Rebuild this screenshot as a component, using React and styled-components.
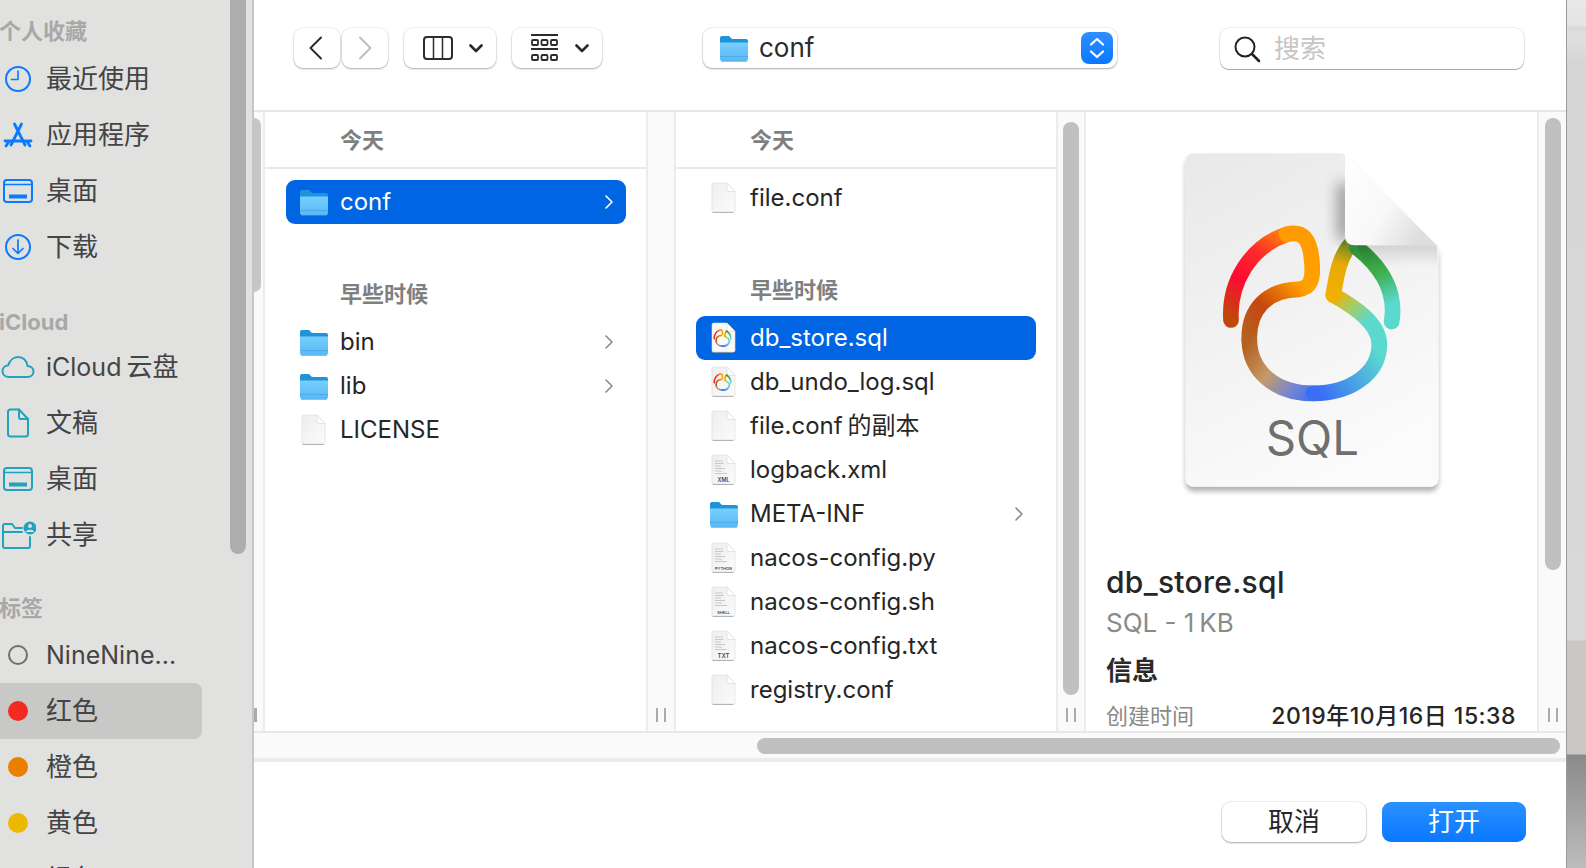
// Import: Dependencies
import React from "react";
import styled, { createGlobalStyle } from "styled-components";

// Styled: NamePart, one piece of a mixed Latin and Chinese name
const NamePart = styled.span`
  font-size: ${(props) => props.$size}px;
  margin-left: ${(props) => props.$gap || 0}px;
`;

// Data: sidebar
const BLUE = "#0a7aff";
const TEAL = "#22a3bd";

const favourites = [
  { id: "recent", name: "最近使用", icon: "clock" },
  { id: "apps", name: "应用程序", icon: "apps" },
  { id: "desktop", name: "桌面", icon: "desktop" },
  { id: "downloads", name: "下载", icon: "download" },
];
const cloudItems = [
  {
    id: "drive",
    name: (
      <>
        <NamePart $size={25}>iCloud</NamePart>
        <NamePart $size={26} $gap={5}>云盘</NamePart>
      </>
    ),
    icon: "cloud",
  },
  { id: "docs", name: "文稿", icon: "doc" },
  { id: "desktop", name: "桌面", icon: "desktop" },
  { id: "shared", name: "共享", icon: "share" },
];
const tags = [
  { name: "NineNine...", ring: true, color: "#6f6f6f", latin: true },
  { name: "红色", color: "#f42a22", active: true },
  { name: "橙色", color: "#ea7f00" },
  { name: "黄色", color: "#edb800" },
  { name: "绿色", color: "#3fb54a" },
];

// Data: file rows
const confFiles = [
  { id: "store", name: "db_store.sql", kind: "sql", selected: true },
  { id: "undo", name: "db_undo_log.sql", kind: "sql" },
  {
    id: "copy",
    name: (
      <>
        file.conf<NamePart $size={24} $gap={5}>的副本</NamePart>
      </>
    ),
    kind: "blank",
  },
  { id: "logback", name: "logback.xml", kind: "text", label: "XML" },
  { id: "meta", name: "META-INF", kind: "folder", more: true },
  { id: "py", name: "nacos-config.py", kind: "text", label: "PYTHON" },
  { id: "sh", name: "nacos-config.sh", kind: "text", label: "SHELL" },
  { id: "txt", name: "nacos-config.txt", kind: "text", label: "TXT" },
  { id: "registry", name: "registry.conf", kind: "blank" },
];

// Icon: SidebarIcon
function SidebarIcon({ type, color }) {
  const line = { fill: "none", stroke: color, strokeWidth: 2, strokeLinecap: "round", strokeLinejoin: "round" };
  return (
    <svg width="36" height="32" viewBox="0 0 36 32">
      {type === "clock" && (
        <g {...line}>
          <circle cx="18" cy="16" r="12" />
          <path d="M18 8v8.5h-6.5" strokeWidth="1.6" />
        </g>
      )}
      {type === "apps" && (
        <g {...line} strokeWidth="2.8">
          <path d="M14.500 5l10.500 21M21.500 5L11 26" />
          <path d="M5 22h26" />
          <path d="M6 27l3-4.500M30 27l-3-4.500" />
        </g>
      )}
      {type === "desktop" && (
        <g {...line}>
          <rect x="4" y="5" width="28" height="22" rx="3" />
          <path d="M4 9.5h28" strokeWidth="1.4" />
          <path d="M9 21.5h18" strokeWidth="4" strokeLinecap="butt" />
        </g>
      )}
      {type === "download" && (
        <g {...line}>
          <circle cx="18" cy="16" r="12" />
          <path d="M18 9v13M13 17.5l5 5 5-5" strokeWidth="1.7" />
        </g>
      )}
      {type === "cloud" && (
        <g {...line}>
          <path d="M9 26c-4 0-6.500-2.500-6.500-5.800 0-3.200 2.400-5.500 5.600-5.600C9.500 9.500 13.500 6 18 6c5.200 0 9 3.800 9.500 9 3.500.2 6 2.500 6 5.600 0 3.200-2.500 5.400-6 5.400z" />
        </g>
      )}
      {type === "doc" && (
        <g {...line}>
          <path d="M10.500 2.500h8.500l9 9.500v15a2.500 2.500 0 0 1-2.500 2.500h-15A2.500 2.500 0 0 1 8 27V5a2.500 2.500 0 0 1 2.500-2.500z" />
          <path d="M19 2.500V10a2 2 0 0 0 2 2h7" />
        </g>
      )}
      {type === "share" && (
        <g {...line}>
          <path d="M3 14v13a2 2 0 0 0 2 2h23a2 2 0 0 0 2-2V18" />
          <path d="M3 14V7a2 2 0 0 1 2-2h7l3 4h7" />
          <path d="M3 13h19" />
          <circle cx="30" cy="9" r="6.500" fill={color} stroke="none" />
          <circle cx="30" cy="7" r="2" fill="#e1e1e0" stroke="none" />
          <path d="M26 13c.8-2.500 7.200-2.500 8 0" stroke="#e1e1e0" fill="#e1e1e0" strokeWidth="1" />
        </g>
      )}
    </svg>
  );
}

// Icon: FolderIcon
function FolderIcon() {
  return (
    <svg width="30" height="28" viewBox="0 0 30 28">
      <path d="M1 4a2 2 0 0 1 2-2h7l3 3h14a2 2 0 0 1 2 2v6H1z" fill="#1f93d8" />
      <path d="M1 8.500h28V25a2 2 0 0 1-2 2H3a2 2 0 0 1-2-2z" fill="url(#folderFront)" />
      <path d="M1 22.500h28" stroke="#4fa9e6" strokeWidth="1" />
      <path d="M2 27.500h26" stroke="#7d8a94" strokeWidth="1" opacity="0.6" />
    </svg>
  );
}

// Icon: Navicat logo, drawn in the coordinates of the big preview
function NavicatLogo({ width = 47 }) {
  const stroke = (id) => ({
    fill: "none",
    stroke: `url(#${id})`,
    strokeWidth: width,
    strokeLinecap: "round",
    strokeLinejoin: "round",
  });
  return (
    <g>
      <path d="M183 540C176 430 240 320 350 283" {...stroke("logoA")} />
      <path d="M350 283C400 270 420 300 425 360C432 420 420 445 385 448" {...stroke("logoB")} />
      <path d="M385 448C290 450 235 510 238 600" {...stroke("logoC")} />
      <path d="M238 600C240 690 310 760 430 760" {...stroke("logoD")} />
      <path d="M430 760C540 760 630 700 628 610" {...stroke("logoE")} />
      <path d="M628 610C625 550 560 505 490 465" {...stroke("logoF")} />
      <path d="M490 465C500 400 510 350 540 315" {...stroke("logoG")} />
      <path d="M560 322C620 370 682 440 665 545" {...stroke("logoH")} />
    </g>
  );
}

// Icon: DocIcon
function DocIcon({ kind, label, selected }) {
  return (
    <svg width="28" height="32" viewBox="0 0 28 32">
      <path
        d="M3 2.500a1.500 1.500 0 0 1 1.500-1.500H18l8 8.500v19a1.500 1.500 0 0 1-1.500 1.500h-20A1.500 1.500 0 0 1 3 28.500z"
        fill={selected ? "#f8f8f8" : "url(#docPage)"}
        stroke="#d9d9d9"
        strokeWidth="0.6"
      />
      <path d="M18 1v7a1.500 1.500 0 0 0 1.500 1.500H26z" fill="#fff" stroke="#d4d4d4" strokeWidth="0.6" />
      <path d="M3.500 30.500h21" stroke="#9a9a9a" strokeWidth="1" opacity="0.7" />
      {kind === "sql" && (
        <g transform="translate(13.500 16) scale(0.034) translate(-425 -520)">
          <NavicatLogo width={48} />
        </g>
      )}
      {kind === "text" && (
        <g>
          <path d="M6 7h8M6 9.500h9M6 12h6M6 14.500h10M6 17h7M6 19.500h12" stroke="#bdbdbd" strokeWidth="0.8" />
          <text x="14.500" y="27.500" textAnchor="middle" fontSize={label === "TXT" ? 6 : label === "XML" ? 5.500 : 4} fontWeight="600" fill="#4a4a4a" fontFamily="Inter, sans-serif">
            {label}
          </text>
        </g>
      )}
    </svg>
  );
}

// Icon: Chevron in a file row
function RowChevron({ color }) {
  return (
    <svg width="10" height="16" viewBox="0 0 10 16">
      <path d="M2 2l6 6-6 6" fill="none" stroke={color} strokeWidth="1.600" strokeLinecap="round" strokeLinejoin="round" />
    </svg>
  );
}

// Icon: small chevron of the toolbar menus
function MenuChevron() {
  return (
    <svg width="14" height="9" viewBox="0 0 14 9">
      <path d="M1.500 1.500L7 7l5.500-5.500" fill="none" stroke="#2a2a2a" strokeWidth="2.600" strokeLinecap="round" strokeLinejoin="round" />
    </svg>
  );
}

// Component: FileRow
function FileRow({ name, kind, label, selected, more }) {
  return (
    <Row $selected={selected}>
      <RowIcon>
        {kind === "folder" ? <FolderIcon /> : <DocIcon kind={kind} label={label} selected={selected} />}
      </RowIcon>
      <RowName>{name}</RowName>
      {more && <RowChevron color={selected ? "#fff" : "#8a8a8a"} />}
    </Row>
  );
}

// Component: Gutter between two columns
function Gutter({ thumbTop, thumbHeight, edge }) {
  return (
    <GutterBar $edge={edge}>
      {thumbHeight ? <Thumb $top={thumbTop} $height={thumbHeight} $edge={edge} /> : null}
      <Handle $edge={edge}>
        <i />
        {edge !== "left" && <i />}
      </Handle>
    </GutterBar>
  );
}

// page: App
function App() {
  return (
    <Page>
      <GlobalStyle />
      <Sidebar>
        <SideScroll />
        <SideTitle $top={17} $bottom={6}>个人收藏</SideTitle>
        {favourites.map((item) => (
          <SideRow key={item.id}>
            <SidebarIcon type={item.icon} color={BLUE} />
            <SideName>{item.name}</SideName>
          </SideRow>
        ))}
        <SideTitle $top={33} $bottom={3}>iCloud</SideTitle>
        {cloudItems.map((item) => (
          <SideRow key={item.id}>
            <SidebarIcon type={item.icon} color={TEAL} />
            <SideName>{item.name}</SideName>
          </SideRow>
        ))}
        <SideTitle $top={31} $bottom={5}>标签</SideTitle>
        {tags.map((item) => (
          <SideRow key={item.name} $active={item.active}>
            <TagBox>
              <TagDot $color={item.color} $ring={item.ring} />
            </TagBox>
            <SideName $latin={item.latin}>{item.name}</SideName>
          </SideRow>
        ))}
      </Sidebar>

      <Dialog>
        <Toolbar>
          <NavButton>
            <svg width="16" height="24" viewBox="0 0 16 24">
              <path d="M13 1.500L2.500 12 13 22.500" fill="none" stroke="#2c2c2c" strokeWidth="2" strokeLinecap="round" strokeLinejoin="round" />
            </svg>
          </NavButton>
          <NavButton $next>
            <svg width="16" height="24" viewBox="0 0 16 24">
              <path d="M3 1.500L13.500 12 3 22.500" fill="none" stroke="#bdbdbd" strokeWidth="2" strokeLinecap="round" strokeLinejoin="round" />
            </svg>
          </NavButton>
          <MenuButton $width={92} $gap={16} $left={16}>
            <svg width="30" height="24" viewBox="0 0 30 24">
              <rect x="1" y="1" width="28" height="22" rx="3" fill="none" stroke="#2c2c2c" strokeWidth="2" />
              <path d="M10.500 1v22M19.500 1v22" stroke="#2c2c2c" strokeWidth="1.500" />
            </svg>
            <MenuChevron />
          </MenuButton>
          <MenuButton $width={90} $gap={17} $left={16}>
            <svg width="27" height="28" viewBox="0 0 27 28">
              <path d="M0 1h27M0 15h27" stroke="#2c2c2c" strokeWidth="1.800" />
              <g fill="none" stroke="#2c2c2c" strokeWidth="1.800">
                <rect x="1" y="6" width="6" height="5" rx="1" />
                <rect x="10.500" y="6" width="6" height="5" rx="1" />
                <rect x="20" y="6" width="6" height="5" rx="1" />
                <rect x="1" y="21" width="6" height="5" rx="1" />
                <rect x="10.500" y="21" width="6" height="5" rx="1" />
                <rect x="20" y="21" width="6" height="5" rx="1" />
              </g>
            </svg>
            <MenuChevron />
          </MenuButton>
          <LocationPopup>
            <FolderIcon />
            <LocationName>conf</LocationName>
            <Stepper>
              <svg width="18" height="24" viewBox="0 0 18 24">
                <path d="M3 8.500L9 3l6 5.500M3 15.500L9 21l6-5.500" fill="none" stroke="#fff" strokeWidth="2.200" strokeLinecap="round" strokeLinejoin="round" />
              </svg>
            </Stepper>
          </LocationPopup>
          <SearchField>
            <svg width="28" height="28" viewBox="0 0 28 28">
              <circle cx="12" cy="12" r="9.500" fill="none" stroke="#222" strokeWidth="2" />
              <path d="M19 19l7 7" stroke="#222" strokeWidth="2.600" strokeLinecap="round" />
            </svg>
            <SearchHint>搜索</SearchHint>
          </SearchField>
        </Toolbar>

        <Browser>
          <Gutter thumbTop={6} thumbHeight={174} edge="left" />
          <FileColumn $width={381}>
            <ColumnHeader $left={75}>今天</ColumnHeader>
            <RowList $top={11} $left={21}>
              <FileRow name="conf" kind="folder" selected more />
              <GroupTitle>早些时候</GroupTitle>
              <FileRow name="bin" kind="folder" more />
              <FileRow name="lib" kind="folder" more />
              <FileRow name="LICENSE" kind="blank" />
            </RowList>
          </FileColumn>
          <Gutter />
          <FileColumn $width={380}>
            <ColumnHeader $left={74}>今天</ColumnHeader>
            <RowList $top={7} $left={20}>
              <FileRow name="file.conf" kind="blank" />
              <GroupTitle>早些时候</GroupTitle>
              {confFiles.map((file) => (
                <FileRow key={file.id} {...file} />
              ))}
            </RowList>
          </FileColumn>
          <Gutter thumbTop={10} thumbHeight={573} />
          <Preview>
            <PreviewIcon>
              <svg width="290" height="370" viewBox="0 0 870 1110">
                <defs>
                  <linearGradient id="folderFront" x1="0" y1="0" x2="0" y2="1">
                    <stop offset="0" stopColor="#78cffd" />
                    <stop offset="1" stopColor="#58b8f5" />
                  </linearGradient>
                  <linearGradient id="docPage" x1="0" y1="0" x2="1" y2="1">
                    <stop offset="0" stopColor="#eeeeee" />
                    <stop offset="1" stopColor="#fbfbfb" />
                  </linearGradient>
                  <linearGradient id="bigPage" x1="0.100" y1="0" x2="0.500" y2="1">
                    <stop offset="0" stopColor="#e9e9e9" />
                    <stop offset="1" stopColor="#fbfbfb" />
                  </linearGradient>
                  <linearGradient id="foldFill" x1="0" y1="0" x2="1" y2="0.600">
                    <stop offset="0" stopColor="#ffffff" />
                    <stop offset="0.600" stopColor="#f8f8f8" />
                    <stop offset="1" stopColor="#dedede" />
                  </linearGradient>
                  <linearGradient id="foldShadeLow" x1="0" y1="0" x2="0" y2="1">
                    <stop offset="0" stopColor="#000" stopOpacity="0.130" />
                    <stop offset="1" stopColor="#000" stopOpacity="0" />
                  </linearGradient>
                  <filter id="pageShadow" x="-10%" y="-10%" width="120%" height="120%">
                    <feDropShadow dx="0" dy="14" stdDeviation="8" floodColor="#000" floodOpacity="0.300" />
                  </filter>
                  <filter id="foldBlur" x="-150%" y="-40%" width="400%" height="180%">
                    <feGaussianBlur stdDeviation="22" />
                  </filter>
                  <clipPath id="foldClip">
                    <rect x="400" y="40" width="125" height="280" />
                  </clipPath>
                  <linearGradient id="logoA" gradientUnits="userSpaceOnUse" x1="183" y1="540" x2="370" y2="270">
                    <stop offset="0" stopColor="#bf4a08" />
                    <stop offset="0.350" stopColor="#ff0a32" />
                    <stop offset="0.650" stopColor="#ff2a2a" />
                    <stop offset="1" stopColor="#ff9a00" />
                  </linearGradient>
                  <linearGradient id="logoB" gradientUnits="userSpaceOnUse" x1="350" y1="283" x2="400" y2="448">
                    <stop offset="0" stopColor="#ff9a00" />
                    <stop offset="1" stopColor="#ffa200" />
                  </linearGradient>
                  <linearGradient id="logoC" gradientUnits="userSpaceOnUse" x1="400" y1="448" x2="238" y2="600">
                    <stop offset="0" stopColor="#ff9d00" />
                    <stop offset="0.550" stopColor="#c8460f" />
                    <stop offset="1" stopColor="#b5601f" />
                  </linearGradient>
                  <linearGradient id="logoD" gradientUnits="userSpaceOnUse" x1="238" y1="600" x2="450" y2="760">
                    <stop offset="0" stopColor="#b5601f" />
                    <stop offset="0.400" stopColor="#c49a6a" />
                    <stop offset="0.700" stopColor="#7a88cc" />
                    <stop offset="1" stopColor="#3a6ff5" />
                  </linearGradient>
                  <linearGradient id="logoE" gradientUnits="userSpaceOnUse" x1="450" y1="760" x2="628" y2="640">
                    <stop offset="0" stopColor="#3a6ff5" />
                    <stop offset="1" stopColor="#5bd9cf" />
                  </linearGradient>
                  <linearGradient id="logoF" gradientUnits="userSpaceOnUse" x1="628" y1="610" x2="490" y2="465">
                    <stop offset="0" stopColor="#5bd9cf" />
                    <stop offset="0.350" stopColor="#5bd9cf" />
                    <stop offset="0.700" stopColor="#aacb62" />
                    <stop offset="1" stopColor="#f2b000" />
                  </linearGradient>
                  <linearGradient id="logoG" gradientUnits="userSpaceOnUse" x1="490" y1="465" x2="540" y2="315">
                    <stop offset="0" stopColor="#f2b000" />
                    <stop offset="0.600" stopColor="#e6aa08" />
                    <stop offset="1" stopColor="#6f8a20" />
                  </linearGradient>
                  <linearGradient id="logoH" gradientUnits="userSpaceOnUse" x1="560" y1="322" x2="665" y2="545">
                    <stop offset="0" stopColor="#2f8f3a" />
                    <stop offset="0.400" stopColor="#3eae4c" />
                    <stop offset="0.800" stopColor="#5bd9cf" />
                    <stop offset="1" stopColor="#5bd9cf" />
                  </linearGradient>
                </defs>
                <path
                  d="M72 40H510Q522 40 532 50L790 305Q805 320 805 340V1015Q805 1040 780 1040H72Q47 1040 47 1015V65Q47 40 72 40Z"
                  fill="url(#bigPage)"
                  filter="url(#pageShadow)"
                />
                <NavicatLogo />
                <g clipPath="url(#foldClip)">
                  <path d="M505 130H545V300H505Z" fill="#000" opacity="0.420" filter="url(#foldBlur)" />
                </g>
                <path d="M560 316H800L805 380H590Z" fill="url(#foldShadeLow)" />
                <path d="M525 42L800 316H555Q525 316 525 286Z" fill="url(#foldFill)" />
                <text x="427" y="945" textAnchor="middle" fontFamily="Inter, 'Liberation Sans', sans-serif" fontSize="142" fill="#6f6f6f">
                  SQL
                </text>
              </svg>
            </PreviewIcon>
            <PreviewName>db_store.sql</PreviewName>
            <PreviewKind>SQL - 1{"\u2009"}KB</PreviewKind>
            <PreviewHeading>信息</PreviewHeading>
            <PreviewMeta>
              <span>创建时间</span>
              <b>2019年10月16日 15:38</b>
            </PreviewMeta>
          </Preview>
          <Gutter thumbTop={6} thumbHeight={452} edge="right" />
        </Browser>

        <HorizontalBar>
          <HorizontalThumb />
        </HorizontalBar>

        <Footer>
          <CancelButton>取消</CancelButton>
          <OpenButton>打开</OpenButton>
        </Footer>
      </Dialog>

      <Desktop />
    </Page>
  );
}

// Export: App
export default App;

// Styled: GlobalStyle
const GlobalStyle = createGlobalStyle`
  html, body {
    margin: 0;
    padding: 0;
    height: 100%;
    overflow: hidden;
  }

  body {
    font-family: Inter, "Noto Sans CJK SC", sans-serif;
    -webkit-font-smoothing: antialiased;
  }
`;

// Styled: Page
const Page = styled.div`
  display: flex;
  height: 868px;
  overflow: hidden;
  width: 1586px;
`;

// Styled: Sidebar
const Sidebar = styled.aside`
  background: #e1e1e0;
  border-right: 2px solid #c6c6c6;
  box-sizing: border-box;
  flex: 0 0 254px;
  height: 868px;
  overflow: hidden;
  position: relative;
`;

// Styled: SideScroll
const SideScroll = styled.div`
  background: #aeaeae;
  border-radius: 0 0 8px 8px;
  height: 554px;
  left: 230px;
  position: absolute;
  top: 0;
  width: 16px;
`;

// Styled: SideTitle
const SideTitle = styled.div`
  color: #a8a8a8;
  font-size: 22px;
  font-weight: 700;
  height: 28px;
  line-height: 28px;
  margin: ${(props) => props.$top}px 0 ${(props) => props.$bottom}px -1px;
`;

// Styled: SideRow
const SideRow = styled.div`
  align-items: center;
  background: ${(props) => (props.$active ? "#c8c8c7" : "transparent")};
  border-radius: 0 8px 8px 0;
  color: #444444;
  display: flex;
  gap: 10px;
  height: 56px;
  width: 202px;
`;

// Styled: SideName
const SideName = styled.span`
  font-size: ${(props) => (props.$latin ? "25px" : "26px")};
  line-height: 32px;
  white-space: nowrap;
`;

// Styled: TagBox
const TagBox = styled.div`
  align-items: center;
  display: flex;
  flex: 0 0 36px;
  justify-content: center;
`;

// Styled: TagDot
const TagDot = styled.i`
  background: ${(props) => (props.$ring ? "transparent" : props.$color)};
  border: ${(props) => (props.$ring ? `2px solid ${props.$color}` : "none")};
  border-radius: 50%;
  box-sizing: border-box;
  height: 20px;
  width: 20px;
`;

// Styled: Dialog
const Dialog = styled.main`
  background: #ffffff;
  display: flex;
  flex: 0 0 1312px;
  flex-direction: column;
`;

// Styled: Toolbar
const Toolbar = styled.header`
  align-items: flex-start;
  border-bottom: 2px solid #e6e6e6;
  box-sizing: border-box;
  display: flex;
  flex: 0 0 112px;
  padding: 28px 0 0 40px;
`;

// Styled: NavButton
const NavButton = styled.div`
  align-items: center;
  background: #ffffff;
  border-radius: 9px;
  box-shadow: 0 1px 2px rgba(0, 0, 0, 0.3), 0 0 0 1px rgba(0, 0, 0, 0.04);
  box-sizing: border-box;
  display: flex;
  height: 40px;
  justify-content: center;
  margin-left: ${(props) => (props.$next ? "2px" : "0")};
  padding-right: ${(props) => (props.$next ? "0" : "3px")};
  width: 46px;
`;

// Styled: MenuButton
const MenuButton = styled.div`
  align-items: center;
  background: #ffffff;
  border-radius: 9px;
  box-shadow: 0 1px 2px rgba(0, 0, 0, 0.3), 0 0 0 1px rgba(0, 0, 0, 0.04);
  box-sizing: border-box;
  display: flex;
  gap: ${(props) => props.$gap}px;
  height: 40px;
  margin-left: ${(props) => props.$left}px;
  padding-left: 19px;
  width: ${(props) => props.$width}px;
`;

// Styled: LocationPopup
const LocationPopup = styled.div`
  align-items: center;
  background: #ffffff;
  border-radius: 9px;
  box-shadow: 0 1px 2px rgba(0, 0, 0, 0.3), 0 0 0 1px rgba(0, 0, 0, 0.06);
  box-sizing: border-box;
  display: flex;
  height: 40px;
  margin-left: 101px;
  padding: 0 4px 0 16px;
  width: 414px;
`;

// Styled: LocationName
const LocationName = styled.span`
  color: #2b2b2b;
  flex: 1;
  font-size: 26px;
  line-height: 32px;
  padding-left: 10px;
`;

// Styled: Stepper
const Stepper = styled.div`
  align-items: center;
  background: linear-gradient(#2f8fff, #0a78ff);
  border-radius: 8px;
  display: flex;
  height: 32px;
  justify-content: center;
  width: 32px;
`;

// Styled: SearchField
const SearchField = styled.div`
  align-items: center;
  background: #ffffff;
  border-radius: 9px;
  box-shadow: 0 1px 1px rgba(0, 0, 0, 0.3), 0 0 0 1px rgba(0, 0, 0, 0.07);
  box-sizing: border-box;
  display: flex;
  gap: 13px;
  height: 41px;
  margin-left: 103px;
  padding-left: 13px;
  width: 304px;
`;

// Styled: SearchHint
const SearchHint = styled.span`
  color: #c6c6c6;
  font-size: 26px;
  line-height: 32px;
`;

// Styled: Browser
const Browser = styled.section`
  display: flex;
  flex: 0 0 619px;
  overflow: hidden;
`;

// Styled: GutterBar
const GutterBar = styled.div`
  align-items: ${(props) => (props.$edge === "left" ? "flex-start" : "center")};
  background: #fafafa;
  border-left: ${(props) => (props.$edge === "left" ? "none" : "2px solid #ececec")};
  border-right: ${(props) => (props.$edge === "right" ? "none" : "2px solid #ececec")};
  box-sizing: border-box;
  display: flex;
  flex: 0 0 ${(props) => (props.$edge === "left" ? "11px" : props.$edge === "right" ? "29px" : "30px")};
  flex-direction: column;
  overflow: hidden;
  padding-bottom: 9px;
`;

// Styled: Thumb
const Thumb = styled.div`
  background: ${(props) => (props.$edge === "left" ? "#c6c6c6" : "#c0c0c0")};
  border-radius: ${(props) => (props.$edge === "left" ? "0 8px 8px 0" : "8px")};
  flex: 0 0 ${(props) => props.$height}px;
  margin-top: ${(props) => props.$top}px;
  width: ${(props) => (props.$edge === "left" ? "7px" : "16px")};
`;

// Styled: Handle
const Handle = styled.div`
  display: flex;
  gap: 6px;
  margin-top: auto;

  & i {
    background: #aaaaaa;
    display: block;
    height: 14px;
    width: ${(props) => (props.$edge === "left" ? "3px" : "2px")};
  }
`;

// Styled: FileColumn
const FileColumn = styled.div`
  background: #ffffff;
  flex: 0 0 ${(props) => props.$width}px;
  min-width: 0;
`;

// Styled: ColumnHeader
const ColumnHeader = styled.div`
  align-items: center;
  border-bottom: 2px solid #e8e8e8;
  box-sizing: border-box;
  color: #7f7f7f;
  display: flex;
  font-size: 22px;
  font-weight: 700;
  height: 57px;
  padding: 0 0 4px ${(props) => props.$left}px;
`;

// Styled: RowList
const RowList = styled.div`
  padding: ${(props) => props.$top}px 20px 0 ${(props) => props.$left}px;
`;

// Styled: GroupTitle
const GroupTitle = styled.div`
  color: #7f7f7f;
  font-size: 22px;
  font-weight: 700;
  height: 32px;
  line-height: 32px;
  margin: 54px 0 10px;
  padding-left: 54px;
`;

// Styled: Row
const Row = styled.div`
  align-items: center;
  background: ${(props) => (props.$selected ? "#0065e2" : "transparent")};
  border-radius: 9px;
  color: ${(props) => (props.$selected ? "#ffffff" : "#262626")};
  display: flex;
  height: 44px;
  padding: 0 12px 0 13px;
`;

// Styled: RowIcon
const RowIcon = styled.div`
  align-items: center;
  display: flex;
  flex: 0 0 41px;
  height: 32px;
`;

// Styled: RowName
const RowName = styled.span`
  flex: 1;
  font-size: 24px;
  line-height: 44px;
  white-space: nowrap;
`;

// Styled: Preview
const Preview = styled.div`
  background: #ffffff;
  box-sizing: border-box;
  flex: 0 0 451px;
  overflow: hidden;
  padding: 0 21px 0 20px;
`;

// Styled: PreviewIcon
const PreviewIcon = styled.div`
  height: 370px;
  margin: 28px 0 0 64px;
`;

// Styled: PreviewName
const PreviewName = styled.div`
  color: #262626;
  font-size: 30px;
  font-weight: 500;
  height: 40px;
  letter-spacing: 0.3px;
  line-height: 40px;
  margin-top: 52px;
`;

// Styled: PreviewKind
const PreviewKind = styled.div`
  color: #8a8a8a;
  font-size: 26px;
  height: 36px;
  line-height: 36px;
  margin-top: 3px;
`;

// Styled: PreviewHeading
const PreviewHeading = styled.div`
  color: #2a2a2a;
  font-size: 26px;
  font-weight: 700;
  height: 36px;
  line-height: 36px;
  margin-top: 12px;
`;

// Styled: PreviewMeta
const PreviewMeta = styled.div`
  display: flex;
  font-size: 22px;
  height: 36px;
  justify-content: space-between;
  line-height: 36px;
  margin-top: 9px;

  & span {
    color: #8a8a8a;
  }

  & b {
    color: #262626;
    font-size: 23px;
    font-weight: 500;
    letter-spacing: 0.5px;
    white-space: nowrap;
  }
`;

// Styled: HorizontalBar
const HorizontalBar = styled.div`
  background: #fafafa;
  border-bottom: 4px solid #ececec;
  border-top: 2px solid #e8e8e8;
  box-sizing: border-box;
  display: flex;
  flex: 0 0 31px;
  justify-content: flex-end;
  padding: 5px 6px 4px 0;
`;

// Styled: HorizontalThumb
const HorizontalThumb = styled.div`
  background: #c0c0c0;
  border-radius: 8px;
  height: 16px;
  width: 803px;
`;

// Styled: Footer
const Footer = styled.footer`
  display: flex;
  flex: 1;
  gap: 16px;
  justify-content: flex-end;
  padding: 40px 40px 0 0;
`;

// Styled: CancelButton
const CancelButton = styled.div`
  align-items: center;
  background: #ffffff;
  border-radius: 9px;
  box-shadow: 0 1px 2px rgba(0, 0, 0, 0.3), 0 0 0 1px rgba(0, 0, 0, 0.06);
  box-sizing: border-box;
  color: #262626;
  display: flex;
  font-size: 26px;
  height: 40px;
  justify-content: center;
  padding-bottom: 5px;
  width: 144px;
`;

// Styled: OpenButton
const OpenButton = styled(CancelButton)`
  background: linear-gradient(#2a91ff, #0a78ff);
  box-shadow: none;
  color: #ffffff;
`;

// Styled: Desktop
const Desktop = styled.div`
  background: linear-gradient(
    #e8e8e8 0,
    #e4e4e4 26px,
    #d8d8d8 27px,
    #e0e0e0 36px,
    #d6d6d6 62px,
    #d9d9d9 640px,
    #c9c8c6 641px,
    #c9c8c6 754px,
    #8a8a8a 755px,
    #bdbdbd 868px
  );
  border-left: 1px solid #9a9a9a;
  flex: 1;
`;
